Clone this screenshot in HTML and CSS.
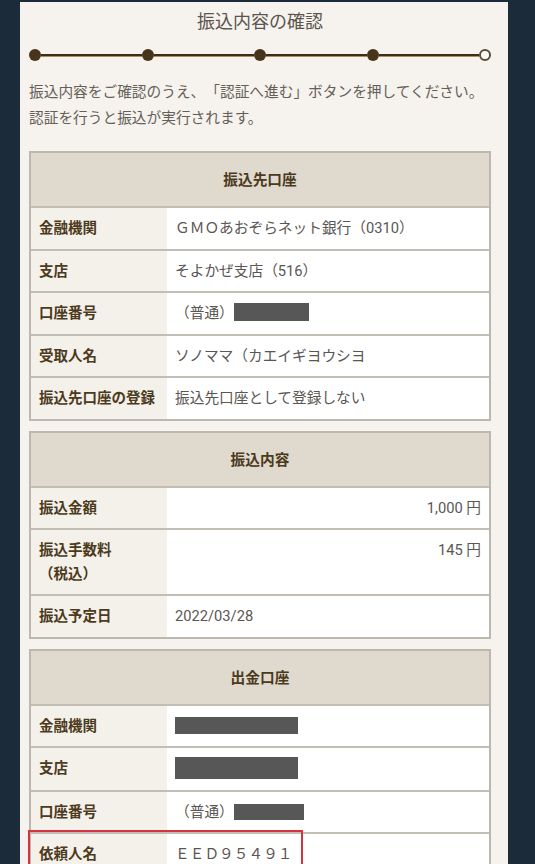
FILE: index.html
```html
<!DOCTYPE html>
<html lang="ja">
  <head>
    <meta charset="UTF-8">
    <meta name="viewport" content="width=device-width, initial-scale=1.0">
    <title>振込内容の確認</title>
    <link rel="stylesheet" href="styles.css">
  </head>
  <body>
    <div class="screen">
      <h1 class="page-title">振込内容の確認</h1>

      <div class="steps">
        <span class="step done"></span>
        <span class="step-line"></span>
        <span class="step done"></span>
        <span class="step-line"></span>
        <span class="step done"></span>
        <span class="step-line"></span>
        <span class="step done"></span>
        <span class="step-line"></span>
        <span class="step current"></span>
      </div>

      <p class="lead">
        振込内容をご確認のうえ、「認証へ進む」ボタンを押してください。<br>
        認証を行うと振込が実行されます。
      </p>

      <!-- 振込先 -->
      <section class="confirm-table">
        <div class="table-head">振込先口座</div>
        <div class="row">
          <div class="row-label">金融機関</div>
          <div class="row-value">ＧＭＯあおぞらネット銀行（0310）</div>
        </div>
        <div class="row">
          <div class="row-label">支店</div>
          <div class="row-value">そよかぜ支店（516）</div>
        </div>
        <div class="row">
          <div class="row-label">口座番号</div>
          <div class="row-value">（普通）<span class="mask mask-num"></span></div>
        </div>
        <div class="row">
          <div class="row-label">受取人名</div>
          <div class="row-value">ソノママ（カエイギヨウシヨ</div>
        </div>
        <div class="row">
          <div class="row-label">振込先口座の登録</div>
          <div class="row-value">振込先口座として登録しない</div>
        </div>
      </section>

      <!-- 金額 -->
      <section class="confirm-table">
        <div class="table-head">振込内容</div>
        <div class="row">
          <div class="row-label">振込金額</div>
          <div class="row-value amount">1,000 円</div>
        </div>
        <div class="row">
          <div class="row-label">振込手数料<br>（税込）</div>
          <div class="row-value amount">145 円</div>
        </div>
        <div class="row">
          <div class="row-label">振込予定日</div>
          <div class="row-value">2022/03/28</div>
        </div>
      </section>

      <!-- 出金元 -->
      <section class="confirm-table">
        <div class="table-head">出金口座</div>
        <div class="row">
          <div class="row-label">金融機関</div>
          <div class="row-value"><span class="mask mask-bank"></span></div>
        </div>
        <div class="row">
          <div class="row-label">支店</div>
          <div class="row-value"><span class="mask mask-branch"></span></div>
        </div>
        <div class="row">
          <div class="row-label">口座番号</div>
          <div class="row-value">（普通）<span class="mask mask-num2"></span></div>
        </div>
        <div class="row highlight">
          <div class="row-label">依頼人名</div>
          <div class="row-value">ＥＥＤ９５４９１</div>
        </div>
      </section>
    </div>
  </body>
</html>
```

FILE: styles.css
```css
html,
body {
  margin: 0;
  background-color: #1c2b39;
  overflow: hidden;
}

body {
  font-family: Roboto, "Noto Sans CJK JP", sans-serif;
  text-spacing-trim: space-all;
}

.screen {
  width: 488px;
  min-height: 862px;
  margin: 2px 0 0 20px;
  padding: 0 17px 0 9px;
  box-sizing: border-box;
  background-color: #f6f2ed;
}

.page-title {
  margin: 0;
  padding-top: 7px;
  font-size: 18px;
  font-weight: 400;
  line-height: 26px;
  text-align: center;
  color: #5b5650;
}

.steps {
  display: flex;
  align-items: center;
  height: 12px;
  margin-top: 14px;
}

.step {
  width: 12px;
  height: 12px;
  border-radius: 50%;
  box-sizing: border-box;
  flex-shrink: 0;
}

.step.done {
  background-color: #48341a;
}

.step.current {
  background-color: #fff;
  border: 2px solid #5c4c33;
}

.step-line {
  flex: 1;
  height: 3px;
  background: linear-gradient(#3f2e14 0 60%, #a8905f 60%);
}

.lead {
  margin: 18px 0 0;
  font-size: 14.7px;
  line-height: 26px;
  color: #645f59;
  white-space: nowrap;
}

.confirm-table {
  margin-top: 20px;
  border: 2px solid #bcb7af;
  background-color: #fff;
}

.confirm-table + .confirm-table {
  margin-top: 10px;
}

.table-head {
  padding: 16px 0 14px;
  line-height: 23px;
  font-size: 14.7px;
  font-weight: 700;
  text-align: center;
  color: #4b3a1c;
  background-color: #e0d9ce;
}

.row {
  position: relative;
  display: grid;
  grid-template-columns: 136px 1fr;
  border-top: 2px solid #c2bdb5;
}

.row-label,
.row-value {
  padding: 9px 8px 8px;
  line-height: 23.5px;
}

.row-label {
  font-size: 14.5px;
  font-weight: 700;
  color: #4b3a1c;
  background-color: #f4f0ea;
  white-space: nowrap;
}

.row-value {
  font-size: 14.7px;
  color: #5a5652;
  background-color: #fff;
}

.row-value.amount {
  text-align: right;
  padding-right: 8px;
}

.mask {
  display: inline-block;
  vertical-align: -3px;
  background-color: #575757;
}

.mask-num {
  width: 75px;
  height: 18px;
}

.mask-bank {
  width: 123px;
  height: 17px;
}

.mask-branch {
  width: 123px;
  height: 22px;
  vertical-align: -5px;
}

.mask-num2 {
  width: 70px;
  height: 16px;
}

.highlight::after {
  content: "";
  position: absolute;
  left: -3px;
  top: -4px;
  width: 275px;
  height: 46px;
  box-sizing: border-box;
  border: 2px solid #d3343f;
}
```
